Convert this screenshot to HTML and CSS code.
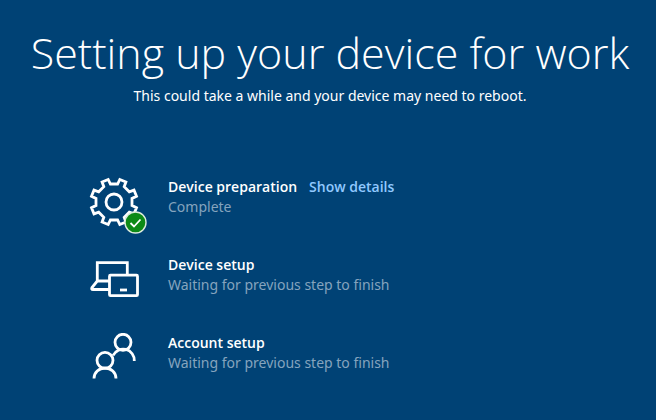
FILE: index.html
```html
<!DOCTYPE html>
<html lang="en">
<head>
    <meta charset="UTF-8">
    <meta name="viewport" content="width=device-width, initial-scale=1.0">
    <title>Setting up your device for work</title>
    <link rel="stylesheet" href="styles.css">
</head>
<body>

<main class="page">
    <header class="header">
        <h1 class="title">Setting up your device for work</h1>
        <p class="subtitle">This could take a while and your device may need to reboot.</p>
    </header>

    <ul class="steps">
        <li class="step">
            <svg class="icon" viewBox="0 0 60 58" aria-hidden="true">
                <g transform="translate(26 25)">
                    <path d="M18 3.6L22.5 5.8L20 11.9L15.3 10.2L10.2 15.3L11.9 20L5.8 22.5L3.6 18L-3.6 18L-5.8 22.5L-11.9 20L-10.2 15.3L-15.3 10.2L-20 11.9L-22.5 5.8L-18 3.6L-18 -3.6L-22.5 -5.8L-20 -11.9L-15.3 -10.2L-10.2 -15.3L-11.9 -20L-5.8 -22.5L-3.6 -18L3.6 -18L5.8 -22.5L11.9 -20L10.2 -15.3L15.3 -10.2L20 -11.9L22.5 -5.8L18 -3.6Z"/>
                    <circle r="8"/>
                </g>
                <circle class="badge" cx="47.5" cy="45.5" r="10.5"/>
                <path class="check" d="M42.5 46l3.5 3.5l6.5-7"/>
            </svg>
            <div class="text">
                <div class="line">
                    <h2 class="name">Device preparation</h2>
                    <a class="details" href="#">Show details</a>
                </div>
                <p class="status">Complete</p>
            </div>
        </li>

        <li class="step">
            <svg class="icon" viewBox="0 0 60 58" aria-hidden="true">
                <path d="M39.3 20V7.7H9.3V26M21.5 26H9.3L4 32.5Q3 34.5 5 34.5H21.5"/>
                <rect x="21.5" y="20.2" width="28" height="20.5" rx="1"/>
                <path d="M32 35h7"/>
            </svg>
            <div class="text">
                <h2 class="name">Device setup</h2>
                <p class="status">Waiting for previous step to finish</p>
            </div>
        </li>

        <li class="step">
            <svg class="icon" viewBox="0 0 60 58" aria-hidden="true">
                <circle cx="35" cy="9.3" r="8"/>
                <path d="M25 22.5A11.2 11.2 0 0 1 46.3 28"/>
                <circle cx="17" cy="27.3" r="8"/>
                <path d="M6 45.5A11 10.5 0 0 1 28 45.5"/>
            </svg>
            <div class="text">
                <h2 class="name">Account setup</h2>
                <p class="status">Waiting for previous step to finish</p>
            </div>
        </li>
    </ul>
</main>

</body>
</html>
```

FILE: styles.css
```css
body {
    margin: 0;
    min-height: 100vh;
    background-color: #004275;
    color: #fff;
    font-family: "Open Sans", "Noto Sans", sans-serif;
}

h1,
h2,
p,
ul {
    margin: 0;
    padding: 0;
}

.page {
    padding-top: 24px;
}

.header {
    text-align: center;
    padding-left: 4px;
}

.title {
    font-size: 43px;
    font-weight: 300;
    line-height: 58px;
}

.subtitle {
    margin-top: 2px;
    font-family: "Noto Sans", "Open Sans", sans-serif;
    font-size: 14px;
    line-height: 24px;
}

.steps {
    list-style: none;
    display: flex;
    flex-direction: column;
    gap: 20px;
    padding: 69px 24px 0 88px;
}

.step {
    display: flex;
    gap: 20px;
}

.icon {
    flex: none;
    width: 60px;
    height: 58px;
    fill: none;
    stroke: #fff;
    stroke-width: 2.8;
}

.icon .badge {
    fill: #0d8a16;
    stroke: #dcebdc;
    stroke-width: 1.4;
}

.icon .check {
    stroke-width: 1.8;
}

.line {
    display: flex;
    gap: 12px;
}

.name {
    font-size: 14px;
    font-weight: 600;
    line-height: 20px;
}

.details {
    font-size: 14px;
    font-weight: 600;
    line-height: 20px;
    color: #91c9ff;
    text-decoration: none;
}

.details:hover {
    text-decoration: underline;
}

.status {
    font-family: "Noto Sans", "Open Sans", sans-serif;
    font-size: 14px;
    line-height: 20px;
    color: #85a4be;
}
```
